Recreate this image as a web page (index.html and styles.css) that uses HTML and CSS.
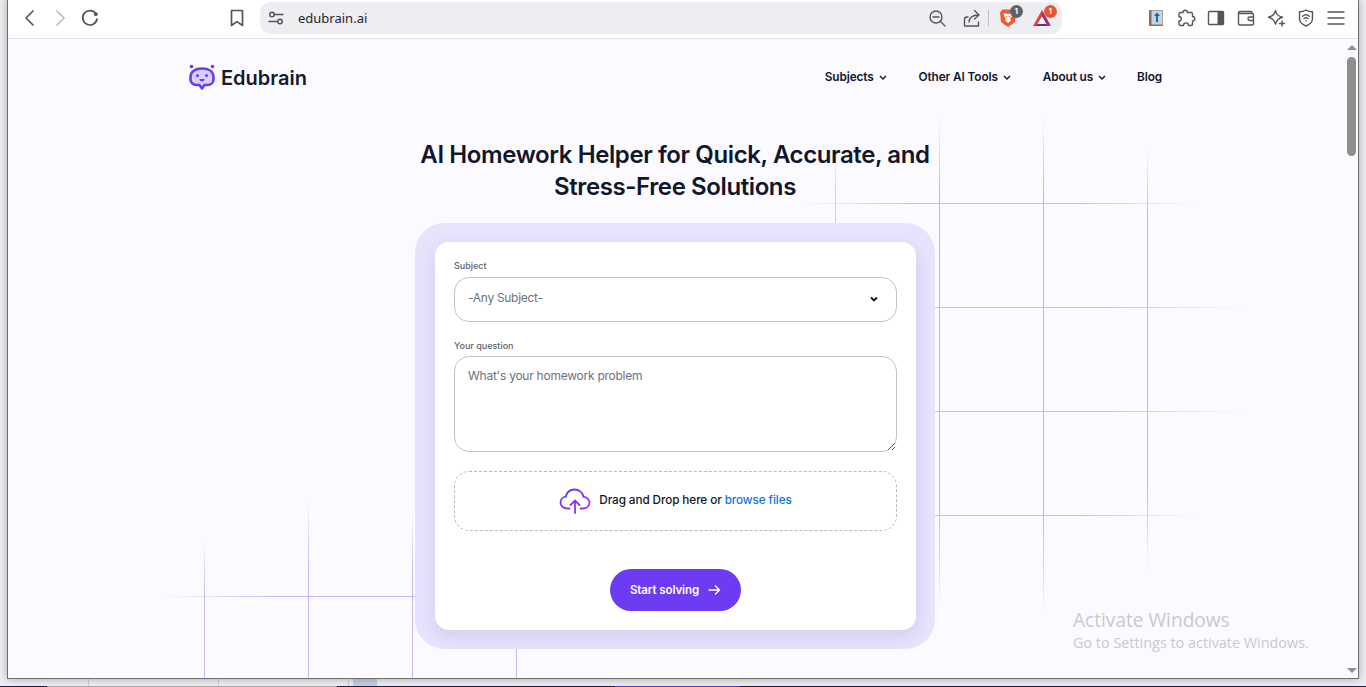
FILE: index.html
```html
<!DOCTYPE html>
<html lang="en">

<head>
  <meta charset="UTF-8">
  <meta name="viewport" content="width=device-width, initial-scale=1.0">
  <title>AI Homework Helper</title>
  <link rel="stylesheet" href="styles.css">
</head>

<body>
  <div class="window">
    <div class="toolbar">
      <button class="tool-btn">
        <svg width="20" height="20" viewBox="0 0 20 20" class="ic"><path d="M13 3 6 10l7 7"/></svg>
      </button>
      <button class="tool-btn">
        <svg width="20" height="20" viewBox="0 0 20 20" class="ic ic-off"><path d="m7 3 7 7-7 7"/></svg>
      </button>
      <button class="tool-btn">
        <svg width="20" height="20" viewBox="0 0 20 20" class="ic"><path d="M15.800 5.600A7.200 7.200 0 1 0 17 11"/><circle cx="15.800" cy="6.200" r="1.900" class="ic-fill"/></svg>
      </button>
      <button class="tool-btn bookmark-btn">
        <svg width="20" height="20" viewBox="0 0 20 20" class="ic"><path d="M4.500 2.500h11v15L10 13.600l-5.500 3.900z"/></svg>
      </button>

      <div class="address">
        <svg width="18" height="18" viewBox="0 0 18 18" class="ic ic-thin site-ic"><circle cx="5" cy="5.500" r="2.300"/><path d="M7.500 5.500H16M2 12.500h8.500"/><circle cx="13" cy="12.500" r="2.300"/></svg>
        <span class="url">edubrain.ai</span>
        <svg width="18" height="18" viewBox="0 0 18 18" class="ic ic-thin zoom-ic"><circle cx="8" cy="8" r="6"/><path d="M5 8h6M12.500 12.500 17 17"/></svg>
        <svg width="20" height="20" viewBox="0 0 20 20" class="ic ic-thin share-ic"><path d="M2.500 18v-6.500c0-1.500 1-2.500 2.500-2.500h1M2.500 18h14V14M7 14c.5-4 3.500-7 9-7M12.500 2.500 17 7l-4.500 4"/></svg>
        <span class="addr-sep"></span>
        <div class="ext-badge brave-ic">
          <svg width="18" height="20" viewBox="0 0 18 20"><path d="M3.500 1.500h11l2.500 3-1 9.500-7 5-7-5-1-9.500z" fill="#f1582a"/><path d="M4.500 5 9 6l4.500-1-.8 3.500-1.700 2 1 2L9 15l-3-2.500 1-2-1.700-2z" fill="#fff"/><path d="M7 8h1.200v1.200H7zM9.800 8H11v1.200H9.800z" fill="#f1582a"/></svg>
          <span class="count count-grey">1</span>
        </div>
        <div class="ext-badge bat-ic">
          <svg width="20" height="18" viewBox="0 0 20 18"><path d="M10 1 1 17l4.600-2L10 7.500z" fill="#e8402f"/><path d="M10 1l9 16-4.600-2L10 7.500z" fill="#a32a74"/><path d="M1 17h18l-4.600-2H5.600z" fill="#6d2c96"/><path d="M10 7.500 5.600 15h8.800z" fill="#fff"/></svg>
          <span class="count count-orange">1</span>
        </div>
      </div>

      <button class="tool-btn first-ext">
        <svg width="16" height="18" viewBox="0 0 16 18"><rect x="1" y="1" width="14" height="16" rx="1" fill="#8a6d5c"/><rect x="3.500" y="1.500" width="11" height="14" fill="#c6d4de"/><path d="M9 3.500 12 7h-2v6H8V7H6z" fill="#0f6cb5"/></svg>
      </button>
      <button class="tool-btn">
        <svg width="20" height="20" viewBox="0 0 20 20" class="ic ic-thin"><path d="M7 4.500c0-3 4.500-3 4.500 0h3.500c.8 0 1.500.7 1.500 1.500v2.500c3 0 3 4.500 0 4.500v3c0 .8-.7 1.500-1.500 1.500h-2.500c0-3.500-5-3.500-5 0H4.500C3.700 17.500 3 16.800 3 16v-3c3 0 3-4.500 0-4.500V6c0-.8.7-1.500 1.500-1.500z"/></svg>
      </button>
      <button class="tool-btn">
        <svg width="20" height="20" viewBox="0 0 20 20" class="ic ic-thin"><rect x="2.500" y="3.500" width="15" height="13" rx="1"/><rect x="11.500" y="3.500" width="6" height="13" class="ic-fill"/></svg>
      </button>
      <button class="tool-btn">
        <svg width="20" height="20" viewBox="0 0 20 20" class="ic ic-thin"><path d="M16 5.500V4.500c0-.6-.4-1-1-1H4c-1 0-1.500.6-1.500 1.500v10.500c0 1 .7 1.500 1.500 1.500h12c.8 0 1.500-.6 1.500-1.500V7c0-.9-.7-1.500-1.500-1.500H2.700M17.500 9h-4c-2 0-2 3.500 0 3.500h4"/></svg>
      </button>
      <button class="tool-btn">
        <svg width="20" height="20" viewBox="0 0 20 20" class="ic ic-thin"><path d="M9.500 2.500c.6 3.800 2.700 5.800 7 6.700-3.900 1-6 2.900-7 7-1-4-3-6-7-7 4-1 6.200-3 7-6.700z"/><path d="M16 13v5M13.500 15.500h5"/></svg>
      </button>
      <button class="tool-btn">
        <svg width="20" height="20" viewBox="0 0 20 20" class="ic ic-thin"><path d="M10 2c2.300 1.300 4.300 1.800 6.500 1.800v6.700c0 3.500-2.800 6-6.500 7.500-3.700-1.500-6.500-4-6.500-7.500V3.800C5.700 3.800 7.700 3.300 10 2z"/><path d="M6.500 8.300c2-1.700 5-1.700 7 0M8 10.500c1.200-.9 2.800-.9 4 0"/><circle cx="10" cy="12.800" r=".8" class="ic-fill"/></svg>
      </button>
      <button class="tool-btn">
        <svg width="20" height="20" viewBox="0 0 20 20" class="ic ic-thin"><path d="M2 4h16M2 10h16M2 16h16"/></svg>
      </button>
    </div>

    <div class="viewport">
      <div class="page">
        <!-- background grid lines, drawn in window coordinates -->
        <svg class="grid-lines" width="1337" height="640" viewBox="8 39 1337 640">
          <defs>
            <linearGradient id="fadeV" x1="0" y1="0" x2="0" y2="1">
              <stop offset="0" stop-color="#b4b9f6" stop-opacity="0"/>
              <stop offset=".15" stop-color="#b4b9f6"/>
              <stop offset=".8" stop-color="#b4b9f6"/>
              <stop offset="1" stop-color="#b4b9f6" stop-opacity="0"/>
            </linearGradient>
            <linearGradient id="fadeFaint" x1="0" y1="0" x2="0" y2="1">
              <stop offset="0" stop-color="#c9cdf7" stop-opacity="0"/>
              <stop offset=".6" stop-color="#c9cdf7"/>
            </linearGradient>
            <linearGradient id="fadeLilac" x1="0" y1="0" x2="0" y2="1">
              <stop offset="0" stop-color="#c3b6fa" stop-opacity="0"/>
              <stop offset=".4" stop-color="#c3b6fa"/>
            </linearGradient>
            <linearGradient id="fadeH" x1="0" y1="0" x2="1" y2="0">
              <stop offset="0" stop-color="#bcc0f8" stop-opacity="0"/>
              <stop offset=".3" stop-color="#bcc0f8"/>
              <stop offset=".7" stop-color="#bcc0f8"/>
              <stop offset="1" stop-color="#bcc0f8" stop-opacity="0"/>
            </linearGradient>
            <linearGradient id="fadeRight" x1="0" y1="0" x2="1" y2="0">
              <stop offset="0" stop-color="#bcc0f8"/>
              <stop offset=".55" stop-color="#bcc0f8"/>
              <stop offset="1" stop-color="#bcc0f8" stop-opacity="0"/>
            </linearGradient>
            <linearGradient id="fadeLeft" x1="0" y1="0" x2="1" y2="0">
              <stop offset="0" stop-color="#c3b6fa" stop-opacity="0"/>
              <stop offset=".5" stop-color="#c3b6fa"/>
            </linearGradient>
          </defs>
          <rect x="835" y="150" width="1" height="80" fill="url(#fadeFaint)"/>
          <rect x="939" y="118" width="1" height="490" fill="url(#fadeV)"/>
          <rect x="1043" y="118" width="1" height="500" fill="url(#fadeV)"/>
          <rect x="1147" y="150" width="1" height="420" fill="url(#fadeV)"/>
          <rect x="800" y="203" width="396" height="1" fill="url(#fadeH)"/>
          <rect x="930" y="307" width="312" height="1" fill="url(#fadeRight)"/>
          <rect x="930" y="411" width="312" height="1" fill="url(#fadeRight)"/>
          <rect x="930" y="515" width="266" height="1" fill="url(#fadeRight)"/>
          <rect x="204" y="540" width="1" height="140" fill="url(#fadeLilac)"/>
          <rect x="308" y="500" width="1" height="180" fill="url(#fadeLilac)"/>
          <rect x="412" y="510" width="1" height="170" fill="url(#fadeLilac)"/>
          <rect x="516" y="640" width="1" height="40" fill="#c3b6fa"/>
          <rect x="160" y="596" width="255" height="1" fill="url(#fadeLeft)"/>
        </svg>

        <header class="site-header">
          <a class="brand">
            <svg width="26" height="26" viewBox="0 0 26 26">
              <circle cx="2.500" cy="2.500" r="1.800" fill="#6c3bf2"/>
              <circle cx="23.500" cy="2.500" r="1.800" fill="#6c3bf2"/>
              <path d="M13 4.500c7 0 11.500 3 11.500 8.500v2.500c0 3.500-3 5.500-6 5.500h-3L13 24.500 10.500 21h-3c-3 0-6-2-6-5.500V13C1.500 7.500 6 4.500 13 4.500z" fill="#d9cffc" stroke="#6c3bf2" stroke-width="2.600" stroke-linejoin="round"/>
              <circle cx="8.500" cy="11.500" r="1.500" fill="#6c3bf2"/>
              <circle cx="17.500" cy="11.500" r="1.500" fill="#6c3bf2"/>
              <path d="M10.300 15h5.400c-.4 1.700-1.400 2.500-2.700 2.500s-2.300-.8-2.700-2.500z" fill="#6c3bf2"/>
            </svg>
            <span class="brand-name">Edubrain</span>
          </a>
          <nav class="main-nav">
            <a class="nav-item nav-subjects">Subjects <svg width="8" height="6" viewBox="0 0 8 6" class="caret"><path d="m1 1 3 3 3-3"/></svg></a>
            <a class="nav-item nav-tools">Other AI Tools <svg width="8" height="6" viewBox="0 0 8 6" class="caret"><path d="m1 1 3 3 3-3"/></svg></a>
            <a class="nav-item nav-about">About us <svg width="8" height="6" viewBox="0 0 8 6" class="caret"><path d="m1 1 3 3 3-3"/></svg></a>
            <a class="nav-item">Blog</a>
          </nav>
        </header>

        <h1 class="page-title">AI Homework Helper for Quick, Accurate, and<br>Stress-Free Solutions</h1>

        <div class="panel">
          <form class="card" action="javascript:void(0);">
            <label class="field-label">Subject</label>
            <div class="select-wrap">
              <select class="subject-select">
                <option>-Any Subject-</option>
              </select>
              <svg width="10" height="7" viewBox="0 0 10 7" class="select-caret"><path d="m2 1.500 3 3 3-3"/></svg>
            </div>

            <label class="field-label question-label">Your question</label>
            <textarea class="question-input" placeholder="What's your homework problem"></textarea>

            <div class="dropzone">
              <svg width="32" height="26" viewBox="0 0 32 26" class="cloud-ic">
                <defs>
                  <linearGradient id="cloudGrad" x1="0" y1="0" x2="1" y2="1">
                    <stop offset="0" stop-color="#4f46f0"/>
                    <stop offset="1" stop-color="#b52df0"/>
                  </linearGradient>
                </defs>
                <path d="M10.500 20.500H8c-3.500 0-6.500-2.600-6.500-6 0-3 2.200-5.400 5.200-5.800C7.800 4.300 11.300 1.500 15.500 1.500c4.700 0 8.300 3.200 9 7.300 3.200.2 6 2.600 6 5.800 0 3.400-2.900 5.900-6.300 5.900h-2.700" fill="none" stroke="url(#cloudGrad)" stroke-width="1.800" stroke-linecap="round"/>
                <path d="M16 25V13M11.500 17l4.500-4.500 4.500 4.500" fill="none" stroke="#8a35f0" stroke-width="1.800" stroke-linecap="round" stroke-linejoin="round"/>
              </svg>
              <span class="drop-text">Drag and Drop here or <a class="browse-link">browse files</a></span>
            </div>

            <button type="submit" class="solve-btn">
              Start solving
              <svg width="14" height="12" viewBox="0 0 14 12" class="arrow-ic"><path d="M1.500 6h11M8 1.500 12.500 6 8 10.500"/></svg>
            </button>
          </form>
        </div>

        <div class="activate-note">
          <div class="activate-title">Activate Windows</div>
          <div class="activate-sub">Go to Settings to activate Windows.</div>
        </div>
      </div>

      <div class="scrollbar">
        <span class="scroll-up"></span>
        <span class="scroll-thumb"></span>
        <span class="scroll-down"></span>
      </div>
    </div>
  </div>

  <div class="desktop-strip"></div>
</body>

</html>
```

FILE: styles.css
```css
html,
body {
  margin: 0;
  height: 687px;
  overflow: hidden;
}

body {
  background-color: #eeeef2;
  font-family: "Inter", "Liberation Sans", sans-serif;
}

/* browser window */
.window {
  width: 1350px;
  height: 678px;
  margin-left: 7px;
  border-left: 1px solid #6f6f6f;
  border-right: 1px solid #6f6f6f;
  border-bottom: 1px solid #6f6f6f;
  background-color: #fff;
  box-shadow: 0 0 8px rgba(0, 0, 0, 0.3);
  position: relative;
}

.toolbar {
  display: flex;
  align-items: center;
  height: 38px;
  padding-left: 7px;
  border-bottom: 1px solid #e2e1ea;
  background-color: #fff;
}

.tool-btn {
  display: flex;
  align-items: center;
  justify-content: center;
  flex: none;
  width: 30px;
  height: 32px;
  margin-top: -3px;
  padding: 0;
  border: none;
  background: none;
}

.bookmark-btn {
  margin-left: 117px;
}

.first-ext {
  margin-left: 79px;
}

.ic {
  fill: none;
  stroke: #55565c;
  stroke-width: 1.700;
  stroke-linecap: round;
  stroke-linejoin: round;
}

.ic-thin {
  stroke-width: 1.400;
}

.ic-off {
  stroke: #bcbcc2;
}

.ic-fill {
  fill: #55565c;
  stroke: none;
}

.address {
  display: flex;
  align-items: center;
  flex: none;
  width: 802px;
  height: 32px;
  margin-left: 8px;
  margin-top: -2px;
  border-radius: 10px;
  background-color: #eeedf2;
}

.site-ic {
  margin-left: 7px;
}

.url {
  margin-left: 13px;
  color: #26262b;
  font-size: 13px;
  font-family: "Noto Sans", sans-serif;
}

.zoom-ic {
  margin-left: 561px;
}

.share-ic {
  margin-left: 16px;
}

.addr-sep {
  width: 1px;
  height: 16px;
  margin-left: 6px;
  background-color: #bdbdc4;
}

.ext-badge {
  position: relative;
  display: flex;
  height: 20px;
}

.brave-ic {
  margin-left: 10px;
}

.bat-ic {
  margin-left: 15px;
  align-items: center;
}

.count {
  position: absolute;
  top: -3px;
  width: 13px;
  height: 13px;
  border-radius: 50%;
  color: #fff;
  font-size: 8px;
  font-weight: 700;
  line-height: 13px;
  text-align: center;
}

.count-grey {
  right: -5.500px;
  background-color: #5f6068;
}

.count-orange {
  right: -4.500px;
  background-color: #f4512c;
}

/* page */
.viewport {
  display: flex;
  height: 639px;
}

.page {
  position: relative;
  flex: 1;
  padding-right: 3px;
  overflow: hidden;
  background-color: #fbfaff;
}

.grid-lines {
  position: absolute;
  top: 0;
  left: 0;
}

.site-header {
  position: relative;
  display: flex;
  align-items: center;
  justify-content: space-between;
  height: 76px;
  padding: 0 180px 0 181px;
}

.brand {
  display: flex;
  align-items: center;
  gap: 6px;
}

.brand-name {
  margin-top: 2px;
  color: #161a2b;
  font-size: 20px;
  font-weight: 600;
}

.main-nav {
  display: flex;
  margin-bottom: 1px;
}

.nav-item {
  color: #12162b;
  font-size: 11.800px;
  font-weight: 600;
  letter-spacing: -0.1px;
}

.nav-subjects {
  margin-right: 32px;
}

.nav-tools {
  margin-right: 32px;
}

.nav-about {
  margin-right: 31px;
}

.caret {
  margin-left: 2px;
  fill: none;
  stroke: #12162b;
  stroke-width: 1.400;
}

.page-title {
  position: relative;
  margin: 24px 0 20px;
  color: #12162b;
  font-size: 24px;
  font-weight: 600;
  line-height: 32px;
  letter-spacing: -0.4px;
  text-align: center;
}

.panel {
  position: relative;
  width: 520px;
  margin: 0 auto;
  padding: 19px 19px 19px 20px;
  border-radius: 30px;
  background-color: #e6e3fc;
  box-sizing: border-box;
}

.card {
  display: flex;
  flex-direction: column;
  padding: 18px 19px 19px;
  border-radius: 14px;
  background-color: #fff;
  box-shadow: 0 6px 16px rgba(60, 50, 140, 0.12);
}

.field-label {
  height: 12px;
  color: #5d6470;
  font-size: 9px;
  font-weight: 500;
  line-height: 12px;
}

.select-wrap {
  position: relative;
  margin-top: 5px;
}

.subject-select {
  display: block;
  width: 100%;
  height: 45px;
  padding: 0 13px 5px;
  border: 1px solid #c2c3c8;
  border-radius: 15px;
  background-color: #fff;
  color: #6b7280;
  font-family: inherit;
  font-size: 12px;
  letter-spacing: -0.3px;
  appearance: none;
}

.select-caret {
  position: absolute;
  top: 19px;
  right: 18px;
  fill: none;
  stroke: #12162b;
  stroke-width: 1.800;
}

.question-label {
  margin-top: 18px;
}

.question-input {
  display: block;
  width: 100%;
  height: 96px;
  margin-top: 4px;
  padding: 11px 13px;
  border: 1px solid #c2c3c8;
  border-radius: 15px;
  box-sizing: border-box;
  font-family: inherit;
  font-size: 12px;
  letter-spacing: -0.25px;
  resize: vertical;
}

.question-input::placeholder {
  color: #6b7280;
  opacity: 1;
}

.dropzone {
  display: flex;
  align-items: center;
  justify-content: center;
  gap: 8px;
  height: 60px;
  margin-top: 19px;
  border: 1px dashed #bcbcc0;
  border-radius: 15px;
  box-sizing: border-box;
}

.drop-text {
  margin-bottom: 2px;
  color: #12162b;
  font-size: 11.750px;
  font-weight: 500;
  letter-spacing: -0.1px;
}

.browse-link {
  color: #1273e6;
}

.solve-btn {
  display: flex;
  align-items: center;
  justify-content: center;
  gap: 8px;
  width: 131px;
  height: 42px;
  margin: 38px auto 0;
  padding: 0;
  border: none;
  border-radius: 21px;
  background-color: #6c3bf2;
  color: #fff;
  font-family: inherit;
  font-size: 11.500px;
  font-weight: 600;
  letter-spacing: -0.1px;
}

.arrow-ic {
  fill: none;
  stroke: #fff;
  stroke-width: 1.300;
}

/* watermark sits over the page */
.activate-note {
  position: absolute;
  top: 569px;
  left: 1065px;
  color: #c9c9ce;
  font-family: "Open Sans", sans-serif;
  white-space: nowrap;
}

.activate-title {
  font-size: 19.100px;
  line-height: 24px;
}

.activate-sub {
  font-size: 14.400px;
  line-height: 22px;
}

.scrollbar {
  display: flex;
  flex-direction: column;
  align-items: center;
  flex: none;
  width: 13px;
  background-color: #fbfaff;
}

.scroll-up {
  margin-top: 6px;
  border-left: 5px solid transparent;
  border-right: 5px solid transparent;
  border-bottom: 5px solid #8f8f8f;
}

.scroll-thumb {
  width: 9px;
  height: 99px;
  margin-top: 7px;
  border-radius: 5px;
  background-color: #8f8f8f;
}

.scroll-down {
  margin-top: auto;
  margin-bottom: 5px;
  border-left: 5px solid transparent;
  border-right: 5px solid transparent;
  border-top: 5px solid #8f8f8f;
}

/* bits of the window behind, showing under this one */
.desktop-strip {
  height: 8px;
  background:
    linear-gradient(to right, #1b2340 0, #1b2340 47px, #a9a9ad 47px, #a9a9ad 337px, #1b2340 337px, #1b2340 615px, #5a3bc8 615px, #5a3bc8 740px, #1b2340 740px) bottom / 100% 1px no-repeat,
    linear-gradient(#c9c9e4, #c9c9e4) 353px 0 / 24px 100% no-repeat,
    linear-gradient(#cfcfdc, #cfcfdc) 88px 0 / 1px 100% no-repeat,
    linear-gradient(#cfcfdc, #cfcfdc) 218px 0 / 1px 100% no-repeat,
    linear-gradient(#cfcfdc, #cfcfdc) 348px 0 / 1px 100% no-repeat;
}
```
